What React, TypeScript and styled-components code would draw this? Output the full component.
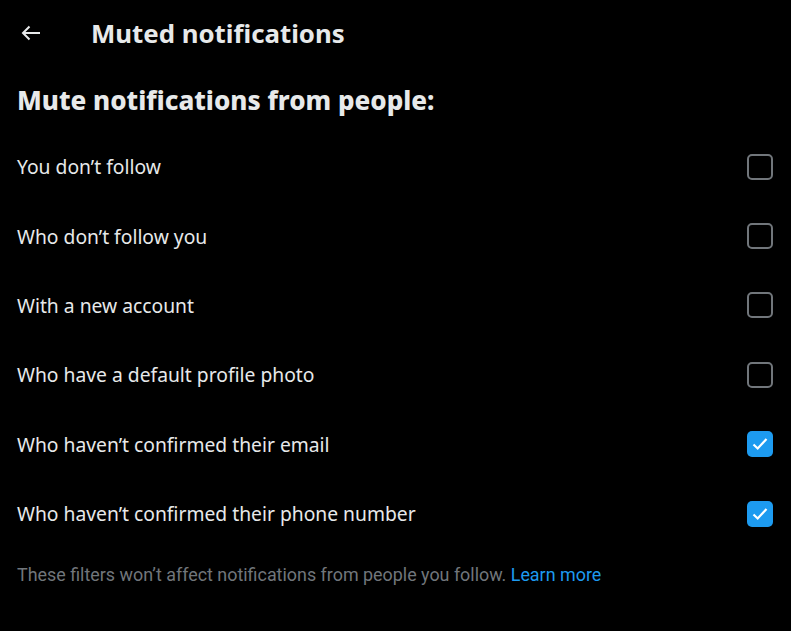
import React from "react";
import styled, { createGlobalStyle } from "styled-components";

const Global = createGlobalStyle`
  html, body { margin: 0; padding: 0; background: #000; }
  body { font-family: "Noto Sans", "Open Sans", sans-serif; color: #e7e9ea; }
`;

const Page = styled.div`
  width: 791px;
  height: 631px;
  background: #000;
  display: flex;
  flex-direction: column;
`;

const Header = styled.header`
  height: 66px;
  display: flex;
  align-items: center;
  padding-left: 20px;
  box-sizing: border-box;
`;

const BackButton = styled.div`
  width: 22px;
  height: 22px;
  display: flex;
  align-items: center;
  justify-content: center;
  margin-right: 49px;
`;

const Title = styled.h1`
  margin: 0;
  font-size: 25.8px;
  font-weight: 700;
  color: #e7e9ea;
`;

const SectionTitle = styled.h2`
  margin: 0;
  height: 66px;
  display: flex;
  align-items: center;
  padding: 1px 17px 0;
  box-sizing: border-box;
  font-size: 26px;
  font-weight: 800;
  color: #e7e9ea;
`;

const Row = styled.label`
  height: 69.4px;
  display: flex;
  align-items: center;
  justify-content: space-between;
  padding: 0 18px 0 17px;
  font-size: 19.3px;
  color: #e7e9ea;
`;

const Box = styled.span<{ $checked: boolean }>`
  width: 26px;
  height: 26px;
  box-sizing: border-box;
  border-radius: 5px;
  border: ${(p) => (p.$checked ? "none" : "2px solid #71767b")};
  background: ${(p) => (p.$checked ? "#1d9bf0" : "transparent")};
  display: flex;
  align-items: center;
  justify-content: center;
`;

const Footer = styled.p`
  margin: 0;
  padding: 16px 17px 14px;
  font-family: Roboto, sans-serif;
  font-size: 17.9px;
  color: #71767b;
`;

const Link = styled.a`
  color: #1d9bf0;
  text-decoration: none;
`;

const items: [string, boolean][] = [
  ["You don’t follow", false],
  ["Who don’t follow you", false],
  ["With a new account", false],
  ["Who have a default profile photo", false],
  ["Who haven’t confirmed their email", true],
  ["Who haven’t confirmed their phone number", true],
];

export default function App() {
  return (
    <Page>
      <Global />
      <Header>
        <BackButton>
          <svg width="22" height="22" viewBox="0 0 22 22" fill="none" stroke="#e7e9ea" strokeWidth="2" strokeLinecap="butt" strokeLinejoin="miter">
            <path d="M20 11H3" />
            <path d="M9.5 4.5L3 11l6.5 6.5" />
          </svg>
        </BackButton>
        <Title>Muted notifications</Title>
      </Header>
      <SectionTitle>Mute notifications from people:</SectionTitle>
      {items.map(([label, checked]) => (
        <Row key={label}>
          <span>{label}</span>
          <Box $checked={checked}>
            {checked && (
              <svg width="18" height="18" viewBox="0 0 18 18" fill="none" stroke="#fff" strokeWidth="2.2">
                <path d="M2.5 9.5l4.2 4L15.5 4" />
              </svg>
            )}
          </Box>
        </Row>
      ))}
      <Footer>
        These filters won’t affect notifications from people you follow. <Link href="#">Learn more</Link>
      </Footer>
    </Page>
  );
}
